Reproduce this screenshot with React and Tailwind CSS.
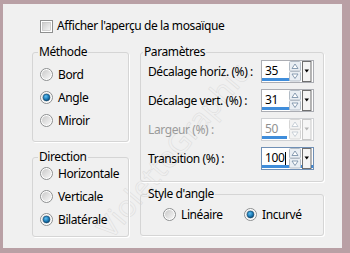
import React from 'react';

// Win7 style radio button
const RadioDot = ({ checked }) => (
  <svg width="13" height="13" viewBox="0 0 13 13" className="shrink-0">
    <defs>
      <linearGradient id="rbg" x1="0" y1="0" x2="1" y2="1">
        <stop offset="0" stopColor="#c9c9c9" />
        <stop offset="1" stopColor="#f7f7f7" />
      </linearGradient>
      <radialGradient id="rdot" cx="0.4" cy="0.35" r="0.7">
        <stop offset="0" stopColor="#5fc0f4" />
        <stop offset="0.6" stopColor="#1b79b4" />
        <stop offset="1" stopColor="#0b3f66" />
      </radialGradient>
    </defs>
    <circle cx="6.5" cy="6.5" r="6" fill="#ffffff" stroke="#8c8e8f" />
    <circle cx="6.5" cy="6.5" r="4.6" fill="url(#rbg)" />
    {checked && <circle cx="6.5" cy="6.5" r="3.4" fill="url(#rdot)" stroke="#124a70" strokeWidth="0.6" />}
  </svg>
);

const Radio = ({ checked, label }) => (
  <div className="flex items-center gap-[5px] h-[23px]">
    <RadioDot checked={checked} />
    <span className="whitespace-nowrap">{label}</span>
  </div>
);

const Checkbox = () => (
  <svg width="13" height="13" viewBox="0 0 13 13" className="shrink-0">
    <defs>
      <linearGradient id="cbg" x1="0" y1="0" x2="1" y2="1">
        <stop offset="0" stopColor="#cbcbcb" />
        <stop offset="1" stopColor="#f6f6f6" />
      </linearGradient>
    </defs>
    <rect x="0.5" y="0.5" width="12" height="12" fill="#ffffff" stroke="#8e8f8f" />
    <rect x="2.5" y="2.5" width="8" height="8" fill="url(#cbg)" stroke="#b8b8b8" strokeWidth="0.6" />
  </svg>
);

const SpinButtons = ({ disabled }) => {
  const tri = disabled ? '#c4ccd4' : '#7d93aa';
  const btn = disabled ? '#f3f3f3' : '#e9eef3';
  const edge = disabled ? '#d6d6d6' : '#b3bcc6';
  return (
    <svg width="23" height="21" viewBox="0 0 23 21" className="shrink-0">
      <rect x="0.5" y="0.5" width="11" height="9.5" rx="1" fill={btn} stroke={edge} />
      <rect x="0.5" y="10.5" width="11" height="9.5" rx="1" fill={btn} stroke={edge} />
      <polygon points="3,7.5 9,7.5 6,3" fill="#ffffff" stroke={tri} strokeWidth="0.9" />
      <polygon points="3,13 9,13 6,17.5" fill="#ffffff" stroke={tri} strokeWidth="0.9" />
      <rect x="13.5" y="0.5" width="8.5" height="20" fill={disabled ? '#f6f6f6' : '#f4f4f4'} stroke={disabled ? '#c8c8c8' : '#6f6f6f'} />
      <polygon points="15.5,8.5 20,8.5 17.75,11.5" fill={disabled ? '#b5b5b5' : '#000000'} />
    </svg>
  );
};

const SpinInput = ({ value, bar, disabled, focused }) => (
  <div
    className={`flex shrink-0 items-center w-[53px] h-[23px] border bg-white pr-[1px] ${
      disabled ? 'border-[#cfd1d4]' : focused ? 'border-[#6f8fb5]' : 'border-[#abadb3]'
    }`}
  >
    <div className="flex flex-col justify-between self-stretch flex-1 min-w-0 pt-[3px] pb-[1px]">
      <div className={`flex items-center pl-[3px] leading-[14px] ${disabled ? 'text-[#8f8f8f]' : 'text-black'}`}>
        {value}
        {focused && <span className="w-[1px] h-[13px] bg-black ml-[1px]" />}
      </div>
      <div className="h-[3px] bg-[#3f8ddb]" style={{ width: bar }} />
    </div>
    <SpinButtons disabled={disabled} />
  </div>
);

const ParamRow = ({ label, disabled, children }) => (
  <div className="flex items-center justify-between h-[23px]">
    <span className={`whitespace-nowrap ${disabled ? 'text-[#9a9a9a]' : ''}`}>{label}</span>
    {children}
  </div>
);

export default function App() {
  return (
    <div className="w-[350px] h-[253px] bg-[#b9a0a5] pt-[4px] pl-[3px] pr-[8px] pb-[5px] font-['Noto_Sans',sans-serif] text-[12px] tracking-[-0.4px] text-black">
      <div className="relative h-full bg-[#f0f0f0] overflow-hidden">
        {/* watermark */}
        <div className="pointer-events-none absolute left-[169px] top-[146px] -translate-x-1/2 -translate-y-1/2 -rotate-50 whitespace-nowrap text-[30px] tracking-normal text-transparent [-webkit-text-stroke:0.5px_#dcdcdc]">
          VioletteGraphic
        </div>

        <div className="relative pt-[14px] pl-[37px]">
          <div className="flex items-center gap-[4px] h-[16px]">
            <Checkbox />
            <span>Afficher l'aperçu de la mosaïque</span>
          </div>
        </div>

        <div className="relative flex gap-[11px] pl-[29px] mt-[11px]">
          {/* left column */}
          <div className="flex flex-col w-[97px]">
            <fieldset className="border border-[#d5d5d5] rounded-[3px] shadow-[1px_1px_0_#ffffff]">
              <legend className="ml-[5px] px-[1px] leading-[14px]">Méthode</legend>
              <div className="pl-[7px] pt-[4px] pb-[9px]">
                <Radio label="Bord" />
                <Radio label="Angle" checked />
                <Radio label="Miroir" />
              </div>
            </fieldset>
            <fieldset className="mt-[8px] border border-[#d5d5d5] rounded-[3px] shadow-[1px_1px_0_#ffffff]">
              <legend className="ml-[5px] px-[1px] leading-[14px]">Direction</legend>
              <div className="pl-[7px] -mt-[2px] pb-[5px]">
                <Radio label="Horizontale" />
                <Radio label="Verticale" />
                <Radio label="Bilatérale" checked />
              </div>
            </fieldset>
          </div>

          {/* right column */}
          <div className="flex flex-col w-[184px]">
            <fieldset className="border border-[#d5d5d5] rounded-[3px] shadow-[1px_1px_0_#ffffff]">
              <legend className="ml-[2px] px-[1px] leading-[14px]">Paramètres</legend>
              <div className="flex flex-col gap-[6px] pl-[7px] pr-[9px] pt-[1px] pb-[11px]">
                <ParamRow label="Décalage horiz. (%) :">
                  <SpinInput value="35" bar={35} />
                </ParamRow>
                <ParamRow label="Décalage vert. (%) :">
                  <SpinInput value="31" bar={32} />
                </ParamRow>
                <ParamRow label="Largeur (%) :" disabled>
                  <SpinInput value="50" bar={25} disabled />
                </ParamRow>
                <ParamRow label="Transition (%) :">
                  <SpinInput value="100" bar={51} focused />
                </ParamRow>
              </div>
            </fieldset>
            <fieldset className="mt-[5px] border border-[#d5d5d5] rounded-[3px] shadow-[1px_1px_0_#ffffff]">
              <legend className="ml-[6px] px-[1px] leading-[14px]">Style d'angle</legend>
              <div className="flex pl-[22px] pt-[2px] pb-[9px]">
                <div className="w-[81px]">
                  <Radio label="Linéaire" />
                </div>
                <Radio label="Incurvé" checked />
              </div>
            </fieldset>
          </div>
        </div>
      </div>
    </div>
  );
}
